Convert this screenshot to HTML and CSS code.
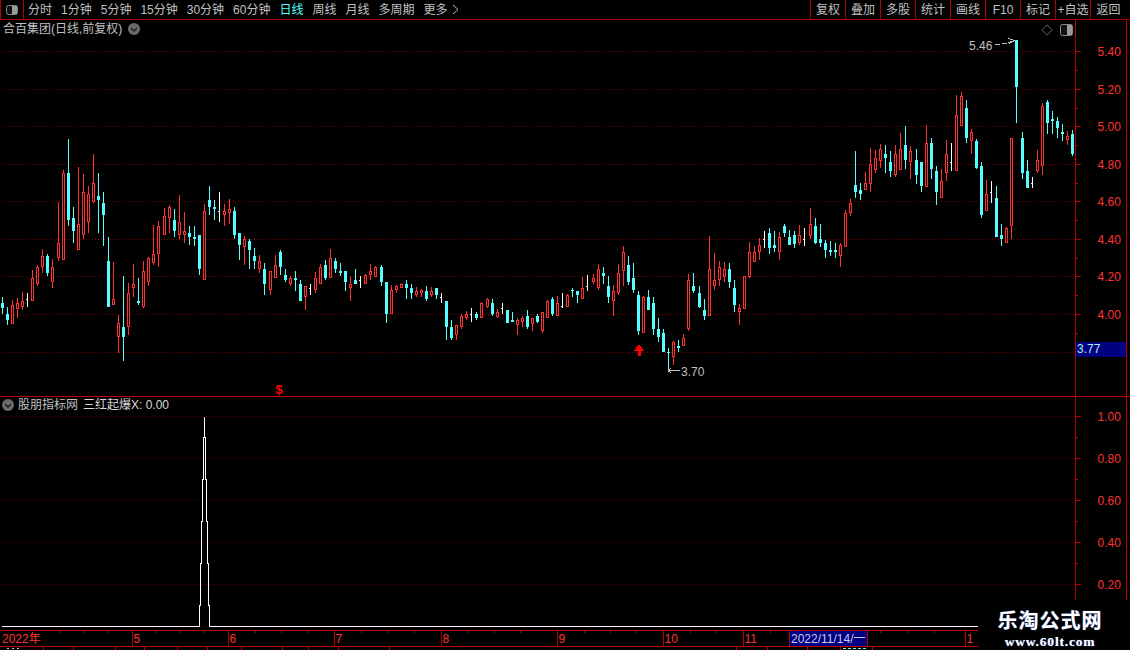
FILE: index.html
```html
<!DOCTYPE html>
<html lang="zh-CN">
<head>
<meta charset="utf-8">
<title>合百集团</title>
<link rel="stylesheet" href="styles.css">
</head>
<body>
<div class="page">
  <header class="toolbar">
    <div class="layout-btn">
      <svg class="icon" width="14" height="12" viewBox="0 0 14 12"><rect x="1.5" y="1.5" width="11" height="9" rx="2" fill="#111" stroke="#8a8a8a"/><rect x="7" y="2" width="5" height="8" fill="#9a9a9a"/></svg>
    </div>
    <nav class="periods">
      <span>分时</span><span>1分钟</span><span>5分钟</span><span>15分钟</span><span>30分钟</span><span>60分钟</span>
      <span class="active">日线</span><span>周线</span><span>月线</span><span>多周期</span>
      <span class="more">更多<svg class="chevron" width="7" height="11" viewBox="0 0 7 11"><path d="M1 1l5 4.5-5 4.5" fill="none" stroke="#c0c0c0"/></svg></span>
    </nav>
    <nav class="actions">
      <span>复权</span><span>叠加</span><span>多股</span><span>统计</span><span>画线</span><span>F10</span><span>标记</span><span>+自选</span><span class="last">返回</span>
    </nav>
  </header>

  <section class="panel panel-main">
    <svg id="mainChart" class="chart" width="1130" height="376" viewBox="0 20 1130 376"></svg>
    <div class="legend legend-main">
      <span>合百集团(日线,前复权)</span>
      <svg class="drop" width="12" height="12" viewBox="0 0 12 12"><circle cx="6" cy="6" r="6" fill="#6a6a6a"/><path d="M3 5l3 3 3-3" fill="none" stroke="#1c1c1c" stroke-width="1.4"/></svg>
    </div>
    <div class="corner-tools">
      <svg width="12" height="12" viewBox="0 0 12 12"><path d="M6 .8L11.2 6 6 11.2.8 6z" fill="none" stroke="#666"/></svg>
      <svg width="13" height="12" viewBox="0 0 13 12"><rect x=".5" y=".5" width="12" height="11" rx="2" fill="#111" stroke="#8a8a8a"/><rect x="7" y="1" width="5" height="10" fill="#9a9a9a"/></svg>
    </div>
  </section>

  <section class="panel panel-sub">
    <svg id="subChart" class="chart" width="1130" height="233" viewBox="0 397 1130 233"></svg>
    <div class="legend legend-sub">
      <svg class="drop" width="12" height="12" viewBox="0 0 12 12"><circle cx="6" cy="6" r="6" fill="#6a6a6a"/><path d="M3 5l3 3 3-3" fill="none" stroke="#1c1c1c" stroke-width="1.4"/></svg>
      <span>股朋指标网</span>
      <span class="legend-value">三红起爆X: 0.00</span>
    </div>
  </section>

  <svg id="timeAxis" class="chart" width="1130" height="20" viewBox="0 630 1130 20"></svg>

  <aside class="watermark">
    <strong>乐淘公式网</strong>
    <em>www.60lt.com</em>
  </aside>
</div>
<script src="chart.js"></script>
</body>
</html>
```
FILE: styles.css
```css
* { box-sizing: border-box; }
html, body { margin: 0; height: 100%; background: #000; overflow: hidden; }
body { font: 12px/1 "Liberation Sans", "Noto Sans CJK SC", sans-serif; color: #c0c0c0; }
.page { position: relative; width: 1130px; height: 650px; display: flex; flex-direction: column; overflow: hidden; }

.toolbar { display: flex; align-items: stretch; height: 20px; border-bottom: 1px solid #b00000; flex: none; }
.layout-btn { width: 24px; display: flex; align-items: center; justify-content: center; border-left: 1px solid #b00000; border-right: 1px solid #b00000; padding-right: 1px; }
.periods { display: flex; align-items: center; gap: 9px; padding-left: 4px; }
.periods .active { color: #55ffff; }
.more { display: flex; align-items: center; gap: 4px; }
.actions { display: flex; margin-left: auto; }
.actions span { width: 35px; display: flex; align-items: center; justify-content: center; border-left: 1px solid #b00000; white-space: nowrap; }
.actions .last { width: 40px; padding-right: 4px; }

.panel { position: relative; flex: none; }
.panel-main { height: 377px; border-bottom: 1px solid #c00000; }
.panel-sub { height: 233px; }
.chart { display: block; flex: none; shape-rendering: crispEdges; }
.chart text { font: 12px "Liberation Sans", "Noto Sans CJK SC", sans-serif; shape-rendering: auto; }
.chart .signal { font-weight: 700; font-size: 13px; }

.legend { position: absolute; display: flex; align-items: center; white-space: nowrap; }
.legend-main { left: 3px; top: 3px; gap: 6px; }
.legend-sub { left: 2px; top: 2px; gap: 4px; }
.legend-value { color: #d8d8d8; margin-left: 1px; }
.corner-tools { position: absolute; right: 57px; top: 4px; display: flex; gap: 7px; }

.watermark { position: absolute; right: 0; bottom: 0; width: 152px; height: 50px; background: #000; display: flex; flex-direction: column; align-items: center; padding-right: 8px; padding-top: 9px; gap: 4px; color: #fff; }
.watermark strong { font: 700 20px/22px "Noto Sans CJK SC", sans-serif; letter-spacing: 1px; text-shadow: 0 0 1px #6a8cff; }
.watermark em { font: 700 13.5px/14px "Liberation Serif", serif; letter-spacing: .8px; text-shadow: 0 0 1px #6a8cff; }
```
FILE: chart.js
```js
const RED = "#ff3232", CYAN = "#55ffff", WHITE = "#ffffff", AXIS = "#b80000", DOT = "#800000", GRAY = "#c0c0c0";

// Candles as "colour high low bodyTop bodyBottom"; values are measured at 3x from `base`.
const SEGMENTS = [
  { base: 130, start: 0, data: "c 502 552 519 534,c 531 585 552 570,r 510 578 526 578,r 504 563 519 533,r 487 540 514 527,w 489 530 508 510,r 420 510 444 510,r 406 468 411 458,r 357 428 378 407,c 372 438 378 429,r 387 474 411 453,r 216 393 339 381,r 120 387 129 387,c 27 288 129 270,c 232 339 264 303,r 111 357 282 357,r 132 327 186 312,r 168 309 192 273,r 72 219 159 213,c 129 309 198 210,c 186 348 219 255,c 321 531 393 531,r 396 522 507 522,r 555 669 579 618,c 438 693 591 621,r 459 615 489 588,r 402 501 462 471,c 444 525 513 519,r 393 534 423 528,r 381 468 384 453,r 285 405 372 396,r 273 411 288 369,r 234 315 258 312,r 225 309 231 261,c 237 321 270 303,r 195 327 276 312,r 246 339 303 312,c 288 345 309 321,c 288 348 321 327,c 315 435 315 417,r 222 450 243 447,c 168 255 210 231,c 210 270 231 237,w 186 276 243 245,r 222 288 243 252,r 207 282 237 246,c 231 327 243 315,c 309 390 309 345,r 318 405 327 348,c 327 417 333 360,c 354 417 378 393,r 375 429 393 414,c 399 495 417 462,r 423 495 423 477,r 375 444 405 441" },
  { base: 230, start: 55, data: "c 60 135 66 111,c 117 156 135 150,r 138 168 144 159,c 123 183 144 150,c 150 213 162 213,r 168 240 168 198,w 162 195 175 177,r 126 189 144 177,r 102 162 111 159,c 90 150 105 144,r 57 141 84 141,c 84 129 93 117,c 99 138 123 129,c 123 183 123 156,r 138 213 162 171,c 117 162 150 162,w 138 174 150 152,r 132 162 135 159,r 102 150 123 132,r 108 141 111 138,c 105 168 111 156,c 156 279 156 252,r 165 252 180 249,r 165 189 168 177,r 159 174 162 171,c 150 207 162 174,c 162 207 174 189,r 171 201 183 192,r 177 201 180 186,c 168 213 183 207,r 171 201 183 192,c 174 207 174 195,w 189 219 201 203,c 213 330 213 291,c 270 330 291 324,r 285 330 285 312,r 252 297 258 288,r 243 270 252 261,w 234 276 252 254,c 246 270 252 264,r 216 261 219 261,r 204 234 207 228,c 207 258 219 252,r 237 264 246 258,w 219 252 234 236,c 240 279 240 279,c 246 276 270 276,r 264 315 270 282,r 258 291 264 273,c 240 297 258 291,r 264 303 264 279,c 252 279 258 276,r 246 309 246 300,r 210 261 213 261,c 201 258 207 252,r 198 258 219 255" },
  { base: 220, start: 111, data: "w 219 264 258 260,r 222 258 226 258,c 204 231 210 213,c 213 249 213 225,r 171 237 204 234,w 165 213 198 200,r 162 192 174 183,r 132 210 147 201,c 141 192 159 168,c 168 249 198 231,r 195 288 213 240,r 132 225 159 216,r 78 198 96 150,c 108 195 135 186,c 129 219 174 210,c 213 345 225 333,r 228 336 231 336,c 210 270 231 270,c 231 345 249 327,c 294 366 327 351,c 327 396 339 396,c 384 456 396 399,r 363 435 366 408,c 360 396 378 384,r 342 378 354 375,r 162 333 180 324,c 159 219 198 213,c 198 264 219 261,c 237 300 270 288,r 48 285 147 285,r 99 210 180 195,r 123 198 141 177,r 126 186 147 168,c 129 204 147 186,c 180 276 204 255,r 252 315 264 273,r 168 264 168 264,r 66 174 96 168,r 78 123 96 123,r 54 120 75 93,w 33 84 57 59,c 24 102 39 84,c 33 96 75 84,r 36 120 51 93,c 12 51 18 39,c 30 75 51 75,c 33 84 45 72,r 15 75 45 66,w 24 78 58 60,r -36 58 12 46,c -6 73 18 70,c 12 82 57 69,c 61 114 69 90" },
  { base: 30, start: 164, data: "c 633 678 660 666,c 640 684 660 666,r 640 711 645 675,r 540 648 549 648,r 507 558 519 546,c 363 504 465 486,c 459 510 480 492,r 426 480 459 477,r 354 486 402 460,r 360 429 384 417,r 342 414 357 390,c 345 429 372 384,c 363 441 396 423,r 345 441 372 432,r 309 417 357 417,c 288 417 345 390,r 348 447 363 393,c 357 462 390 435,c 396 486 396 468,r 285 468 339 468,c 324 447 339 417,c 408 525 423 486,r 417 501 453 501,r 330 453 372 426,w 339 423 397 399,r 195 423 255 420,r 186 286 198 285,c 210 339 234 324,r 297 372 306 330,c 327 417 333 414,c 396 564 408 555,r 450 543 492 540,w 453 519 486 488,c 468 621 504 621,c 582 648 615 627,r 591 639 594 636,r 324 627 324 585,c 30 279 30 171,c 306 447 324 429,c 390 474 423 474,w 441 474 459 461,r 360 430 390 420,r 219 435 228 405,c 210 312 216 279,c 243 312 267 273,c 261 324 273 294,c 282 333 306 312,r 303 345 318 327,c 300 378 312 372" }
];

const rect = (x, y, w, h, fill) => `<rect x="${x}" y="${y}" width="${w}" height="${h}" fill="${fill}"/>`;
const label = (x, y, text, fill) => `<text x="${x}" y="${y}" fill="${fill}">${text}</text>`;
const dots = (y, gap) => `<path d="M2 ${y + 0.5}H1075" stroke="${DOT}" stroke-dasharray="1 ${gap}" fill="none"/>`;

function candle(i, base, spec) {
  const [kind, ...values] = spec.split(" ");
  const [hi, lo, top, bottom] = values.map(v => Math.round(base + Number(v) / 3));
  const px = Math.floor(2.515 + 5.04706 * i);
  const wick = Math.max(lo - hi, 1);
  if (kind === "c") return rect(px, hi, 1, wick, CYAN) + rect(px - 1, top, 3, Math.max(bottom - top, 1), CYAN);
  if (kind === "w") return rect(px, hi, 1, wick, WHITE) + rect(px - 1, top, 1, 1, WHITE);
  let out = "";
  if (top > hi) out += rect(px, hi, 1, top - hi, RED);
  if (lo > bottom) out += rect(px, bottom, 1, lo - bottom, RED);
  const h = Math.max(bottom - top, 1);
  return out + `<rect x="${px - 0.5}" y="${top + 0.5}" width="2" height="${h}" fill="#000" stroke="${RED}"/>`;
}

function yAxis(top, bottom, majors, gap) {
  let s = rect(1075, top, 1, bottom - top, AXIS) + rect(1126, top, 1, bottom - top, AXIS);
  majors.forEach(([y, text], k) => {
    s += dots(y, gap) + rect(1075, y, 6, 1, AXIS);
    if (text) s += label(1097.5, y + 5, text, RED);
    const next = majors[k + 1];
    if (next) s += rect(1075, Math.round((y + next[0]) / 2), 3, 1, AXIS);
  });
  return s;
}

function drawMain() {
  const grid = [[51, "5.40"], [89, "5.20"], [126, "5.00"], [164, "4.80"], [201, "4.60"], [239, "4.40"], [276, "4.20"], [314, "4.00"], [352, ""]];
  let s = yAxis(20, 396, grid, 2);
  s += rect(1076, 342, 50, 15, "#000080") + label(1077, 353, "3.77", "#a8f0f0");
  SEGMENTS.forEach(seg => seg.data.split(",").forEach((spec, k) => { s += candle(seg.start + k, seg.base, spec); }));
  s += label(969, 50, "5.46", GRAY);
  s += `<path d="M995 44.5H1000M1002 43.5H1007M1008 42.5L1015 40.5M1008 38.5L1015 40.5 1009 43.5" stroke="${GRAY}" fill="none"/>`;
  s += `<path d="M668 370.5H680M668 370.5L671 368M668 370.5L671 373" stroke="${GRAY}" fill="none"/>`;
  s += label(681, 376, "3.70", GRAY);
  s += `<path d="M639 344L644 350.5H640.5V356H637.5V350.5H634z" fill="#ff0000"/>`;
  s += `<text class="signal" x="279" y="394" fill="#ff0000" text-anchor="middle">$</text>`;
  document.getElementById("mainChart").innerHTML = s;
}

function drawSub() {
  const grid = [[416, "1.00"], [458, "0.80"], [500, "0.60"], [542, "0.40"], [584, "0.20"]];
  let s = yAxis(397, 600, grid, 3);
  s += `<path d="M2 626.5H199.5V605.5H200.5V563.5H201.5V521.5H202.5V479.5H203.5V437.5H204.5V416.5V437.5H205.5V479.5H206.5V521.5H207.5V563.5H208.5V605.5H209.5V626.5H978" stroke="${WHITE}" fill="none"/>`;
  document.getElementById("subChart").innerHTML = s;
}

function drawTime() {
  let s = rect(0, 630, 978, 1, AXIS) + rect(0, 646, 978, 1, AXIS);
  [[132, "5"], [228, "6"], [334, "7"], [441, "8"], [557, "9"], [663, "10"], [743, "11"], [965, "1"]].forEach(([x, t]) => {
    s += rect(x, 630, 1, 16, AXIS) + label(x + 1.5, 643, t, RED);
  });
  s += label(2, 643, "2022年", RED);
  [60, 84, 108, 156, 180, 204, 255, 281, 308, 361, 387, 414, 468, 494, 520, 584, 610, 636, 690, 716, 770, 880, 907, 934].forEach(x => { s += rect(x, 631, 1, 2, AXIS); });
  [43, 73, 115, 144, 177, 207, 241, 282, 308, 338, 389, 736, 767, 807, 840, 872].forEach(x => { s += rect(x, 647, 1, 3, AXIS); });
  s += rect(789, 631, 78, 15, "#000080") + rect(789, 630, 1, 16, AXIS) + rect(867, 630, 1, 16, AXIS);
  s += label(791, 643, "2022/11/14/一", "#c8c8e8");
  s += `<path d="M7 648.5H21" stroke="${GRAY}" stroke-dasharray="2 3" fill="none"/>`;
  s += `<path d="M843 648.5H867" stroke="${CYAN}" stroke-dasharray="3 2" fill="none"/>`;
  document.getElementById("timeAxis").innerHTML = s;
}

drawMain();
drawSub();
drawTime();
```
